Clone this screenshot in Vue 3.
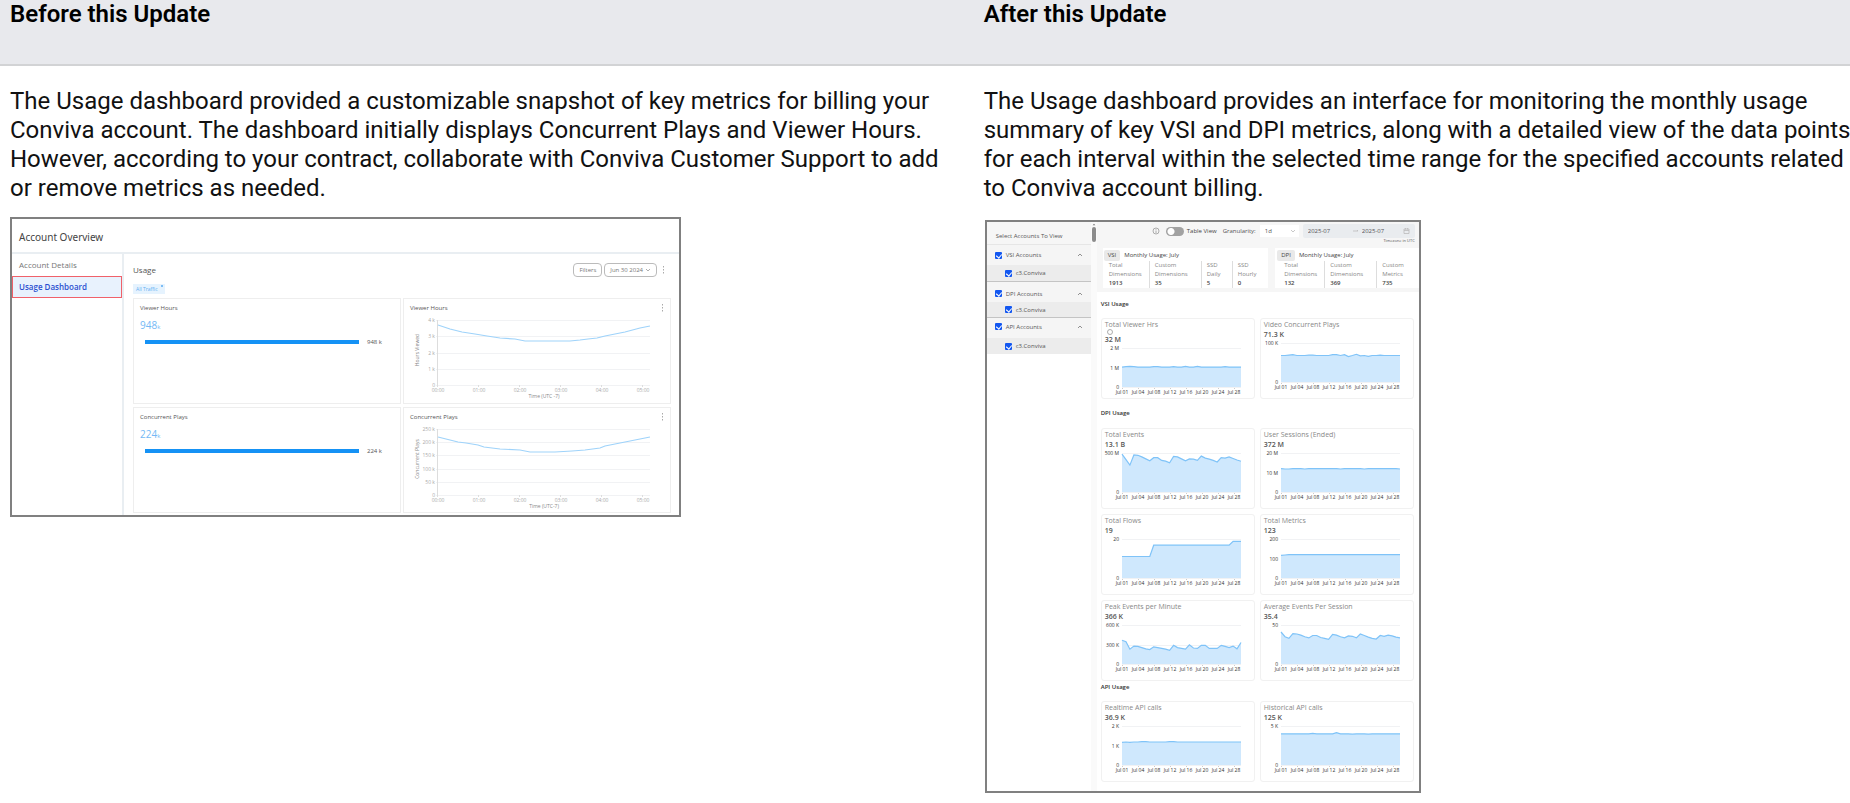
<script setup>
const wave = (base, bumps = {}) =>
  Array.from({ length: 31 }, (_, i) => base + (bumps[i] ?? 0))

const plot = { left: 21, right: 140, top: 2, bottom: 41 }
const days = ['01', '04', '08', '12', '16', '20', '24', '28']

const linePoints = (values) =>
  values
    .map((v, i) => {
      const x = plot.left + ((plot.right - plot.left) * i) / (values.length - 1)
      const y = plot.bottom - (plot.bottom - plot.top) * v
      return `${x.toFixed(1)},${y.toFixed(1)}`
    })
    .join(' ')

const areaPoints = (values) =>
  `${plot.left},${plot.bottom} ${linePoints(values)} ${plot.right},${plot.bottom}`

const tickY = (i, count) =>
  plot.top + ((plot.bottom - plot.top) * i) / (count - 1)

const sections = [
  {
    name: 'VSI Usage',
    charts: [
      { title: 'Total Viewer Hrs', info: true, value: '32 M', ticks: ['2 M', '1 M', '0'], values: wave(0.51, { 1: 0.01, 2: 0.02, 3: 0.01, 8: 0.01, 9: 0.01, 13: 0.01, 16: 0.02, 19: 0.02, 26: 0.01 }) },
      { title: 'Video Concurrent Plays', value: '71.3 K', ticks: ['100 K', '0'], values: wave(0.68, { 2: 0.01, 3: 0.02, 7: 0.01, 8: 0.01, 13: 0.02, 14: 0.02, 16: 0.02, 17: -0.03, 19: 0.03, 20: -0.01, 22: -0.02, 25: 0.01 }) },
    ],
  },
  {
    name: 'DPI Usage',
    charts: [
      { title: 'Total Events', value: '13.1 B', ticks: ['500 M', '0'], values: [0.97, 0.83, 0.69, 0.95, 0.94, 0.9, 0.85, 0.8, 0.88, 0.88, 0.81, 0.79, 0.75, 0.91, 0.9, 0.85, 0.8, 0.85, 0.84, 0.81, 0.92, 0.87, 0.84, 0.81, 0.77, 0.88, 0.87, 0.9, 0.86, 0.82, 0.79] },
      { title: 'User Sessions (Ended)', value: '372 M', ticks: ['20 M', '10 M', '0'], values: wave(0.6, { 1: -0.01, 2: -0.01, 6: -0.01, 15: -0.01, 21: -0.01, 30: -0.01 }) },
      { title: 'Total Flows', value: '19', ticks: ['20', '0'], values: [...Array(8).fill(0.55), ...Array(20).fill(0.84), 0.94, 0.94, 0.94] },
      { title: 'Total Metrics', value: '123', ticks: ['200', '100', '0'], values: wave(0.6, { 0: -0.02, 1: -0.01 }) },
      { title: 'Peak Events per Minute', value: '366 K', ticks: ['600 K', '300 K', '0'], values: [0.61, 0.57, 0.38, 0.46, 0.45, 0.42, 0.39, 0.37, 0.44, 0.42, 0.4, 0.38, 0.35, 0.48, 0.42, 0.4, 0.38, 0.49, 0.41, 0.4, 0.48, 0.48, 0.4, 0.4, 0.4, 0.48, 0.45, 0.42, 0.46, 0.39, 0.55] },
      { title: 'Average Events Per Session', value: '35.4', ticks: ['50', '0'], values: [0.82, 0.7, 0.66, 0.78, 0.77, 0.74, 0.7, 0.67, 0.73, 0.73, 0.68, 0.66, 0.63, 0.76, 0.74, 0.7, 0.67, 0.72, 0.71, 0.67, 0.77, 0.73, 0.69, 0.66, 0.64, 0.73, 0.71, 0.74, 0.72, 0.69, 0.67] },
    ],
  },
  {
    name: 'API Usage',
    compact: true,
    charts: [
      { title: 'Realtime API calls', value: '36.9 K', ticks: ['2 K', '1 K', '0'], values: wave(0.59, { 0: -0.01, 2: -0.01, 5: 0.01, 6: 0.01, 12: 0.01, 13: 0.01 }) },
      { title: 'Historical API calls', value: '125 K', ticks: ['5 K', '0'], values: wave(0.8, { 8: 0.01, 14: 0.03, 18: -0.01, 22: -0.01 }) },
    ],
  },
]

const accountGroups = [
  { name: 'VSI Accounts', kind: 'vsi' },
  { name: 'DPI Accounts', kind: 'dpi' },
  { name: 'API Accounts', kind: 'api' },
]

const summaries = [
  {
    tag: 'VSI',
    metrics: [
      ['Total', 'Dimensions', '1913'],
      ['Custom', 'Dimensions', '35'],
      ['SSD', 'Daily', '5'],
      ['SSD', 'Hourly', '0'],
    ],
  },
  {
    tag: 'DPI',
    metrics: [
      ['Total', 'Dimensions', '132'],
      ['Custom', 'Dimensions', '369'],
      ['Custom', 'Metrics', '735'],
    ],
  },
]

const hours = ['00:00', '01:00', '02:00', '03:00', '04:00', '05:00']

const oldRows = [
  {
    title: 'Viewer Hours',
    value: '948',
    axis: 'Hours Viewed',
    time: 'Time (UTC -7)',
    ticks: ['4 k', '3 k', '2 k', '1 k', '0'],
    top: 7,
    bottom: 72,
    line: '35,12 47,16 59,19 72,21 84,23 97,25 112,26 122,28 137,28 167,28 177,27 185,26 194,25 202,23 212,21 222,19 237,15 247,13',
  },
  {
    title: 'Concurrent Plays',
    value: '224',
    axis: 'Concurrent Plays',
    time: 'Time (UTC-7)',
    ticks: ['250 k', '200 k', '150 k', '100 k', '50 k', '0'],
    top: 7,
    bottom: 73,
    line: '35,15 47,18 55,20 63,21 75,23 81,25 97,27 117,28 127,30 152,30 169,29 182,28 197,26 202,24 212,22 222,20 237,17 247,15',
  },
]

const oldTickY = (row, i) =>
  Math.round(row.top + ((row.bottom - row.top) * i) / (row.ticks.length - 1))
</script>

<template>
  <div class="page">
    <table class="compare">
      <colgroup>
        <col class="col-before" />
        <col />
      </colgroup>
      <thead>
        <tr>
          <th scope="col">Before this Update</th>
          <th scope="col">After this Update</th>
        </tr>
      </thead>
      <tbody>
        <tr>
          <td class="before">
            <p>
              The Usage dashboard provided a customizable snapshot of key metrics for billing your
              Conviva account. The dashboard initially displays Concurrent Plays and Viewer Hours.
              However, according to your contract, collaborate with Conviva Customer Support to add
              or remove metrics as needed.
            </p>

            <section class="shot old">
              <header class="old-head">Account Overview</header>
              <div class="old-body">
                <nav class="old-nav">
                  <a href="#details">Account Details</a>
                  <a href="#usage" class="active">Usage Dashboard</a>
                </nav>
                <div class="old-main">
                  <div class="old-bar">
                    <span class="old-usage">Usage</span>
                    <button type="button">Filters</button>
                    <button type="button">
                      Jun 30 2024
                      <svg class="chev" viewBox="0 0 6 6"><path d="M1 2l2 2 2-2" /></svg>
                    </button>
                    <svg class="kebab" viewBox="0 0 4 8"><path d="M1 0h1v1.500h-1zM1 3h1v1.500h-1zM1 6h1v1.500h-1z" /></svg>
                  </div>
                  <button type="button" class="chip">
                    All Traffic
                    <svg viewBox="0 0 4 4"><path d="M1 1l2 2M3 1l-2 2" /></svg>
                  </button>
                  <div class="old-grid">
                    <template v-for="row in oldRows" :key="row.title">
                      <article class="old-card">
                        <h3>{{ row.title }}</h3>
                        <div class="old-value">{{ row.value }}<small>k</small></div>
                        <div class="old-meter"><i></i><span>{{ row.value }} k</span></div>
                      </article>
                      <article class="old-card">
                        <h3>
                          {{ row.title }}
                          <svg class="kebab" viewBox="0 0 4 8"><path d="M1 0h1v1.500h-1zM1 3h1v1.500h-1zM1 6h1v1.500h-1z" /></svg>
                        </h3>
                        <svg class="old-chart" viewBox="1 4 266 84">
                          <g v-for="(t, i) in row.ticks" :key="t">
                            <rect class="grid" x="33" :y="oldTickY(row, i)" width="214" height="1" />
                            <text x="32" :y="oldTickY(row, i) + 2" text-anchor="end">{{ t }}</text>
                          </g>
                          <rect class="axis" x="34" :y="row.top" width="1" :height="row.bottom - row.top" />
                          <g v-for="(h, i) in hours" :key="h">
                            <rect class="axis" :x="34 + i * 41" :y="row.bottom" width="1" height="2" />
                            <text :x="35 + i * 41" :y="row.bottom + 7" text-anchor="middle">{{ h }}</text>
                          </g>
                          <text class="name" x="141" :y="row.bottom + 13" text-anchor="middle">{{ row.time }}</text>
                          <text class="name" text-anchor="middle" transform="translate(16 37) rotate(-90)">{{ row.axis }}</text>
                          <polyline :points="row.line" />
                        </svg>
                      </article>
                    </template>
                  </div>
                </div>
              </div>
            </section>
          </td>

          <td class="after">
            <p>
              The Usage dashboard provides an interface for monitoring the monthly usage
              summary of key VSI and DPI metrics, along with a detailed view of the data points
              for each interval within the selected time range for the specified accounts related
              to Conviva account billing.
            </p>

            <section class="shot new">
              <aside class="accounts">
                <h3>Select Accounts To View</h3>
                <div v-for="g in accountGroups" :key="g.kind" class="group" :class="g.kind">
                  <label class="parent">
                    <input type="checkbox" checked />
                    {{ g.name }}
                    <svg class="caret" viewBox="0 0 6 6"><path d="M1 4l2-2 2 2" /></svg>
                  </label>
                  <label class="child"><input type="checkbox" checked /> c3.Conviva</label>
                </div>
              </aside>
              <div class="scroll">
                <svg viewBox="0 0 6 4"><path d="M1 3l2-2 2 2z" /></svg>
                <i></i>
              </div>

              <div class="panel">
                <div class="top">
                  <div class="tools">
                    <svg class="info" viewBox="0 0 8 8"><circle cx="4" cy="4" r="3" /><path d="M4 3.500v2.500M4 2v.7" /></svg>
                    <label class="switch"><input type="checkbox" role="switch" /> Table View</label>
                    <label class="gran" for="granularity">Granularity:</label>
                    <div class="pick">
                      <select id="granularity"><option>1d</option></select>
                      <svg class="chev" viewBox="0 0 6 6"><path d="M1 2l2 2 2-2" /></svg>
                    </div>
                    <div class="range">
                      <input type="text" value="2025-07" aria-label="Start month" />
                      <svg class="arrow" viewBox="0 0 6 6"><path d="M0 3h5M4 2l1 1" /></svg>
                      <input type="text" value="2025-07" aria-label="End month" />
                      <svg class="cal" viewBox="0 0 8 8"><path d="M1 2h5v4.500h-5zM1 3.500h5M2.500 1v1.500M4.500 1v1.500" /></svg>
                    </div>
                  </div>
                  <div class="zone">Timezone in UTC</div>
                  <div class="summaries">
                    <article v-for="s in summaries" :key="s.tag" class="summary" :class="s.tag.toLowerCase()">
                      <h4><b>{{ s.tag }}</b> Monthly Usage: July</h4>
                      <div class="metrics">
                        <div v-for="(m, i) in s.metrics" :key="i">
                          <span>{{ m[0] }}</span>
                          <span>{{ m[1] }}</span>
                          <strong>{{ m[2] }}</strong>
                        </div>
                      </div>
                    </article>
                  </div>
                </div>

                <section v-for="s in sections" :key="s.name" class="usage">
                  <h2 :class="{ compact: s.compact }">{{ s.name }}</h2>
                  <div class="cards">
                    <article v-for="c in s.charts" :key="c.title" class="card">
                      <h3>{{ c.title }}</h3>
                      <div v-if="c.info" class="hint">
                        <svg viewBox="0 0 6 6"><circle cx="3" cy="3" r="2.500" /></svg>
                      </div>
                      <div class="value">{{ c.value }}</div>
                      <svg class="chart" viewBox="1 0 152 50">
                        <g v-for="(t, i) in c.ticks" :key="t">
                          <rect class="grid" :x="plot.left" :y="Math.round(tickY(i, c.ticks.length))" width="119" height="1" />
                          <text x="18" :y="Math.round(tickY(i, c.ticks.length)) + 2" text-anchor="end">{{ t }}</text>
                        </g>
                        <polygon :points="areaPoints(c.values)" />
                        <polyline :points="linePoints(c.values)" />
                        <g v-for="(d, i) in days" :key="d">
                          <rect class="tick" :x="21 + i * 16" y="42" width="1" height="1" />
                          <text :x="21 + i * 16" y="48" text-anchor="middle">Jul {{ d }}</text>
                        </g>
                      </svg>
                    </article>
                  </div>
                </section>
              </div>
            </section>
          </td>
        </tr>
      </tbody>
    </table>
  </div>
</template>

<style>
body {
  background: #fff;
}
</style>

<style scoped>
* {
  box-sizing: border-box;
}
.page {
  overflow-x: clip;
}
.compare {
  width: calc(100% + 10px);
  table-layout: fixed;
  border-collapse: collapse;
  font: 24px/29px Roboto, sans-serif;
  color: #111;
}
.col-before {
  width: 52.35%;
}
th {
  height: 65px;
  padding: 0 0 0 10px;
  background: #e8e9ed;
  border-bottom: 2px solid #d2d3d5;
  text-align: left;
  vertical-align: top;
  font-weight: 600;
  color: #000;
}
td {
  padding: 21px 0 10px 10px;
  vertical-align: top;
}
td.before {
  padding-right: 20px;
}
p {
  margin: 0;
}
.shot {
  width: 100%;
  border: 2px solid #808080;
  background: #fff;
  font: 6px/8px "Open Sans", "Noto Sans", sans-serif;
  color: #555;
}
h2,
h3,
h4 {
  margin: 0;
  font-weight: 400;
  font-size: 6px;
}
button,
input,
select {
  margin: 0;
  padding: 0;
  border: 0;
  background: none;
  font: inherit;
  color: inherit;
}
svg {
  display: block;
}
svg path,
svg circle,
svg polyline {
  fill: none;
  stroke: #999;
  stroke-width: 0.8;
}
.chev,
.caret {
  width: 6px;
  height: 6px;
}

/* Previous dashboard */
.old {
  max-width: 671px;
  margin-top: 14px;
}
.old-head {
  height: 35px;
  padding-left: 7px;
  border-bottom: 2px solid #e9eef2;
  font-family: "Noto Sans", sans-serif;
  font-size: 10px;
  line-height: 37px;
  color: #444;
}
.old-body {
  display: flex;
}
.old-nav {
  width: 112px;
  border-right: 2px solid #e9eef2;
  font-size: 8px;
  line-height: 22px;
}
.old-nav a {
  display: block;
  padding-left: 7px;
  border: 1px solid transparent;
  border-left: 0;
  line-height: 20px;
  color: #777;
  text-decoration: none;
}
.old-nav a.active {
  border: 1px solid #f0616a;
  padding-left: 6px;
  background: #e8f2fd;
  color: #2b50d0;
  font-weight: 600;
}
.old-main {
  flex: 1;
  padding: 9px 8px 2px 9px;
}
.old-bar {
  display: flex;
  align-items: center;
  gap: 2px;
  height: 14px;
}
.old-usage {
  flex: 1;
  font-size: 8px;
}
.old-bar button {
  display: flex;
  align-items: center;
  gap: 2px;
  height: 14px;
  padding: 0 5px;
  border: 1px solid #bbb;
  border-radius: 4px;
  color: #777;
}
.kebab {
  width: 4px;
  height: 8px;
}
.kebab path {
  fill: #aaa;
  stroke: none;
}
.old-bar .kebab {
  margin: 0 5px 0 3px;
}
.chip {
  display: flex;
  height: 10px;
  margin: 7px 0 4px;
  padding: 0 1px 0 3px;
  background: #e6f3fe;
  color: #62aff3;
  font-size: 5px;
  line-height: 11px;
}
.chip svg {
  width: 4px;
  height: 4px;
  margin-left: 2px;
}
.chip path {
  stroke: #62aff3;
}
.old-grid {
  display: grid;
  grid-template-columns: 1fr 1fr;
  gap: 3px 2px;
}
.old-card {
  min-height: 106px;
  border: 1px solid #eee;
}
.old-card h3 {
  display: flex;
  justify-content: space-between;
  align-items: center;
  height: 18px;
  padding: 0 5px 0 6px;
}
.old-value {
  padding-left: 6px;
  font-size: 10px;
  line-height: 16px;
  color: #74b9f5;
}
.old-value small {
  font-size: 6px;
}
.old-meter {
  display: flex;
  align-items: center;
  height: 14px;
  padding-left: 11px;
}
.old-meter i {
  flex: 1;
  height: 4px;
  background: #1592f5;
}
.old-meter span {
  width: 41px;
  padding-left: 8px;
}
.old-chart {
  width: 100%;
}
.old-chart text {
  font-size: 5px;
  fill: #aaa;
}
.old-chart .name {
  fill: #888;
}
.grid {
  fill: #f1f2f4;
}
.axis {
  fill: #ddd;
}
.old-chart polyline {
  stroke: #9fd3fa;
  stroke-width: 1.2;
}

/* Current dashboard */
.new {
  display: flex;
  max-width: 436px;
  margin: 17px 0 0 1px;
}
.accounts {
  width: 104px;
}
.accounts h3 {
  height: 22px;
  padding: 9px 0 0 9px;
  background: #f6f6f6;
  line-height: 10px;
}
.group {
  background: #f5f5f5;
  border-bottom: 1px solid #c4c4c4;
}
.group.vsi {
  border-top: 1px solid #e6e6e6;
}
.group.api {
  border-bottom: 0;
}
.parent,
.child {
  display: flex;
  align-items: center;
  gap: 4px;
}
.parent {
  height: 20px;
  padding: 0 8px;
}
.dpi .parent {
  padding-top: 3px;
}
.api .parent {
  padding-bottom: 3px;
}
.child {
  height: 16px;
  padding-left: 18px;
  background: #ececec;
}
.dpi .child {
  height: 15px;
}
.caret {
  margin-left: auto;
}
.caret path {
  stroke: #777;
}
.accounts input {
  position: relative;
  width: 7px;
  height: 7px;
  appearance: none;
  border-radius: 1px;
  background: #1357f0;
}
.accounts input::after {
  content: "";
  position: absolute;
  left: 2px;
  top: 1px;
  width: 3px;
  height: 4px;
  border: solid #fff;
  border-width: 0 1px 1px 0;
  transform: rotate(40deg);
}
.scroll {
  width: 6px;
  padding: 1px 1px 0;
  background: #fafafa;
}
.scroll svg {
  width: 4px;
  height: 3px;
}
.scroll svg path {
  fill: #777;
  stroke: none;
}
.scroll i {
  display: block;
  width: 4px;
  height: 15px;
  margin-top: 1px;
  border-radius: 2px;
  background: #8c8c8c;
}
.panel {
  flex: 1;
  min-width: 0;
  padding-bottom: 9px;
}
.top {
  padding: 2px 0 4px 6px;
  background: #f6f6f6;
}
.tools {
  display: flex;
  align-items: center;
  justify-content: flex-end;
  height: 14px;
  padding-right: 4px;
}
.info {
  width: 8px;
  height: 8px;
  margin-right: 6px;
}
.switch {
  display: flex;
  align-items: center;
  gap: 3px;
  margin-right: 6px;
  color: #444;
}
.switch input {
  width: 18px;
  height: 9px;
  appearance: none;
  border-radius: 5px;
  background: radial-gradient(circle at 5px 50%, #fff 3px, #a2a2a2 4px);
}
.gran {
  margin-right: 4px;
}
.pick {
  display: flex;
  align-items: center;
  width: 39px;
  height: 12px;
  margin-right: 4px;
  padding: 0 3px 0 5px;
  background: #fff;
}
.pick select {
  flex: 1;
  min-width: 0;
  appearance: none;
}
.range {
  display: flex;
  align-items: center;
  width: 112px;
  height: 14px;
  padding: 0 4px 0 5px;
  background: #e9ecef;
  border-radius: 2px;
}
.range input {
  width: 45px;
}
.range input + svg + input {
  width: 40px;
}
.arrow {
  width: 6px;
  height: 6px;
  margin-right: 3px;
}
.cal {
  width: 8px;
  height: 8px;
  margin-left: auto;
}
.pick path,
.range path {
  stroke: #bbb;
}
.zone {
  padding-right: 4px;
  text-align: right;
  font-size: 4px;
  line-height: 6px;
}
.summaries {
  display: flex;
  gap: 7px;
  margin-top: 4px;
}
.summary {
  min-width: 0;
  min-height: 40px;
  padding-top: 2px;
  background: #fff;
}
.summary.vsi {
  flex: 165;
}
.summary.dpi {
  flex: 143;
}
.summary h4 {
  display: flex;
  gap: 4px;
  padding-left: 1px;
  line-height: 11px;
  color: #444;
}
.summary b {
  padding: 0 4px;
  border-radius: 2px;
  background: #e9e9e9;
  font-weight: 400;
}
.summary.dpi h4 {
  padding-left: 2px;
}
.metrics {
  display: flex;
  padding-left: 6px;
}
.summary.dpi .metrics {
  padding-left: 9px;
}
.metrics div {
  flex: none;
  width: 40px;
  color: #888;
}
.metrics div + div {
  width: 52px;
  padding-left: 5px;
  border-left: 1px solid #ddd;
}
.vsi .metrics div + div + div {
  width: 31px;
}
.metrics div:last-child {
  flex: 1;
  width: auto;
}
.metrics span,
.metrics strong {
  display: block;
  line-height: 9px;
}
.metrics strong {
  font-weight: 600;
  color: #444;
}
.usage {
  padding: 0 5px 0 4px;
}
h2 {
  height: 29px;
  font-weight: 600;
  line-height: 29px;
  color: #333;
}
.top + .usage h2 {
  height: 26px;
  line-height: 25px;
}
h2.compact {
  height: 20px;
  line-height: 13px;
}
.cards {
  display: grid;
  grid-template-columns: 1fr 1fr;
  gap: 5px;
}
.card {
  min-width: 0;
  min-height: 81px;
  padding-top: 2px;
  border: 1px solid #f1f1f1;
  border-radius: 3px;
}
.card h3 {
  padding-left: 3px;
  font-size: 7px;
  color: #888;
}
.hint {
  height: 5px;
  padding-left: 5px;
}
.hint svg {
  width: 6px;
  height: 6px;
}
.value {
  padding-left: 3px;
  font-size: 7px;
  line-height: 12px;
  font-weight: 600;
  color: #555;
}
.chart {
  width: 100%;
}
.chart text {
  font-size: 5px;
  fill: #333;
}
.chart polygon {
  fill: #cfe8fd;
}
.chart polyline {
  stroke: #7fc3f8;
  stroke-width: 1.2;
}
.chart .tick {
  fill: #ccc;
}
</style>
